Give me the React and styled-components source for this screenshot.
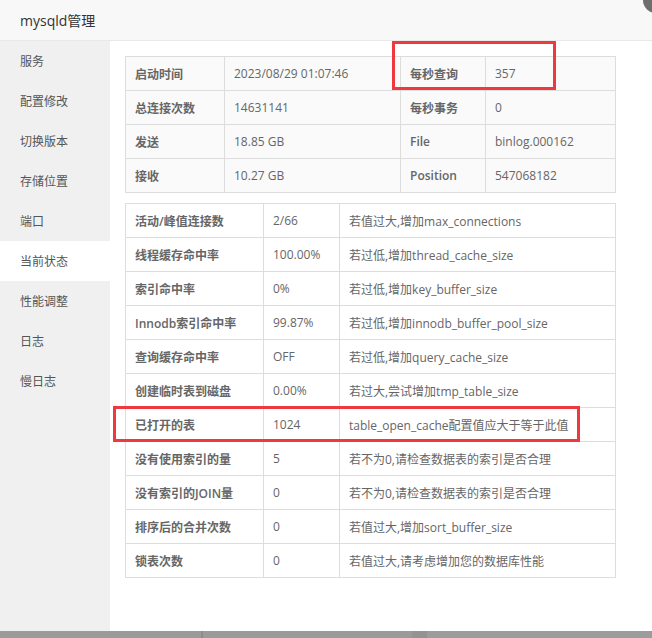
import styled, { createGlobalStyle } from "styled-components"

const Global = createGlobalStyle`
  html, body { margin: 0; padding: 0; background: #fff; }
  body { font-family: "Open Sans", "Noto Sans CJK SC", sans-serif; }
`

const Window = styled.div`
  position: relative;
  width: 652px;
  height: 638px;
  overflow: hidden;
  display: flex;
  flex-direction: column;
  background: #fff;
`

const TitleBar = styled.div`
  height: 40px;
  flex: 0 0 40px;
  display: flex;
  align-items: center;
  padding-left: 20px;
  background: #f8f8f8;
  border-bottom: 1px solid #e8e8e8;
  font-size: 14px;
  color: #333;
`

const CloseDot = styled.div`
  position: absolute;
  top: -13px;
  right: -17px;
  width: 26px;
  height: 26px;
  border-radius: 50%;
  background: #6e6e6e;
`

const Body = styled.div`
  flex: 1;
  display: flex;
  min-height: 0;
`

const Sidebar = styled.ul`
  width: 110px;
  flex: 0 0 110px;
  margin: 0;
  padding: 0;
  list-style: none;
  background: #f0f0f0;
`

const NavItem = styled.li`
  height: 40px;
  line-height: 42px;
  padding-left: 20px;
  font-size: 12px;
  color: #555;
  background: ${p => (p.$active ? "#fff" : "transparent")};
`

const Content = styled.div`
  flex: 1;
  padding: 15px 0 0 15px;
  display: flex;
  flex-direction: column;
  gap: 10px;
`

const TableWrap = styled.div`
  position: relative;
  width: 490px;
`

const Table = styled.table`
  width: 490px;
  border-collapse: collapse;
  table-layout: fixed;
  background: ${p => p.$bg || "#fff"};
`

const Cell = styled.td`
  height: 33px;
  padding: 0 0 0 9px;
  border: 1px solid #ddd;
  font-size: 12px;
  color: #666;
  white-space: nowrap;
  font-weight: ${p => (p.$label ? 600 : 400)};
`

const Mark = styled.div`
  position: absolute;
  border: 3px solid #ee3a3f;
  box-sizing: border-box;
  pointer-events: none;
`

const BottomStrip = styled.div`
  height: 7px;
  flex: 0 0 7px;
  background: linear-gradient(to right, #9a9a9a 0, #9a9a9a 201px, #8c8c8c 201px, #8c8c8c 203px, #9a9a9a 203px, #9a9a9a 412px, #939393 412px, #939393 427px, #9c9c9c 427px);
`

const nav = ["服务", "配置修改", "切换版本", "存储位置", "端口", "当前状态", "性能调整", "日志", "慢日志"]

const summary = [
  ["启动时间", "2023/08/29 01:07:46", "每秒查询", "357"],
  ["总连接次数", "14631141", "每秒事务", "0"],
  ["发送", "18.85 GB", "File", "binlog.000162"],
  ["接收", "10.27 GB", "Position", "547068182"],
]

const status = [
  ["活动/峰值连接数", "2/66", "若值过大,增加max_connections"],
  ["线程缓存命中率", "100.00%", "若过低,增加thread_cache_size"],
  ["索引命中率", "0%", "若过低,增加key_buffer_size"],
  ["Innodb索引命中率", "99.87%", "若过低,增加innodb_buffer_pool_size"],
  ["查询缓存命中率", "OFF", "若过低,增加query_cache_size"],
  ["创建临时表到磁盘", "0.00%", "若过大,尝试增加tmp_table_size"],
  ["已打开的表", "1024", "table_open_cache配置值应大于等于此值"],
  ["没有使用索引的量", "5", "若不为0,请检查数据表的索引是否合理"],
  ["没有索引的JOIN量", "0", "若不为0,请检查数据表的索引是否合理"],
  ["排序后的合并次数", "0", "若值过大,增加sort_buffer_size"],
  ["锁表次数", "0", "若值过大,请考虑增加您的数据库性能"],
]

export default function App() {
  return (
    <>
      <Global />
      <Window>
        <TitleBar>mysqld管理</TitleBar>
        <CloseDot />
        <Body>
          <Sidebar>
            {nav.map(n => (
              <NavItem key={n} $active={n === "当前状态"}>{n}</NavItem>
            ))}
          </Sidebar>
          <Content>
            <TableWrap>
              <Table $bg="#fafafa">
                <colgroup>
                  <col style={{ width: 99 }} />
                  <col style={{ width: 176 }} />
                  <col style={{ width: 85 }} />
                  <col style={{ width: 130 }} />
                </colgroup>
                <tbody>
                  {summary.map(r => (
                    <tr key={r[0]}>
                      <Cell $label>{r[0]}</Cell>
                      <Cell>{r[1]}</Cell>
                      <Cell $label>{r[2]}</Cell>
                      <Cell>{r[3]}</Cell>
                    </tr>
                  ))}
                </tbody>
              </Table>
              <Mark style={{ left: 267, top: -15, width: 164, height: 49 }} />
            </TableWrap>
            <TableWrap>
              <Table>
                <colgroup>
                  <col style={{ width: 138 }} />
                  <col style={{ width: 76 }} />
                  <col style={{ width: 276 }} />
                </colgroup>
                <tbody>
                  {status.map(r => (
                    <tr key={r[0]}>
                      <Cell $label>{r[0]}</Cell>
                      <Cell>{r[1]}</Cell>
                      <Cell>{r[2]}</Cell>
                    </tr>
                  ))}
                </tbody>
              </Table>
              <Mark style={{ left: -12, top: 203, width: 467, height: 36 }} />
            </TableWrap>
          </Content>
        </Body>
        <BottomStrip />
      </Window>
    </>
  )
}
